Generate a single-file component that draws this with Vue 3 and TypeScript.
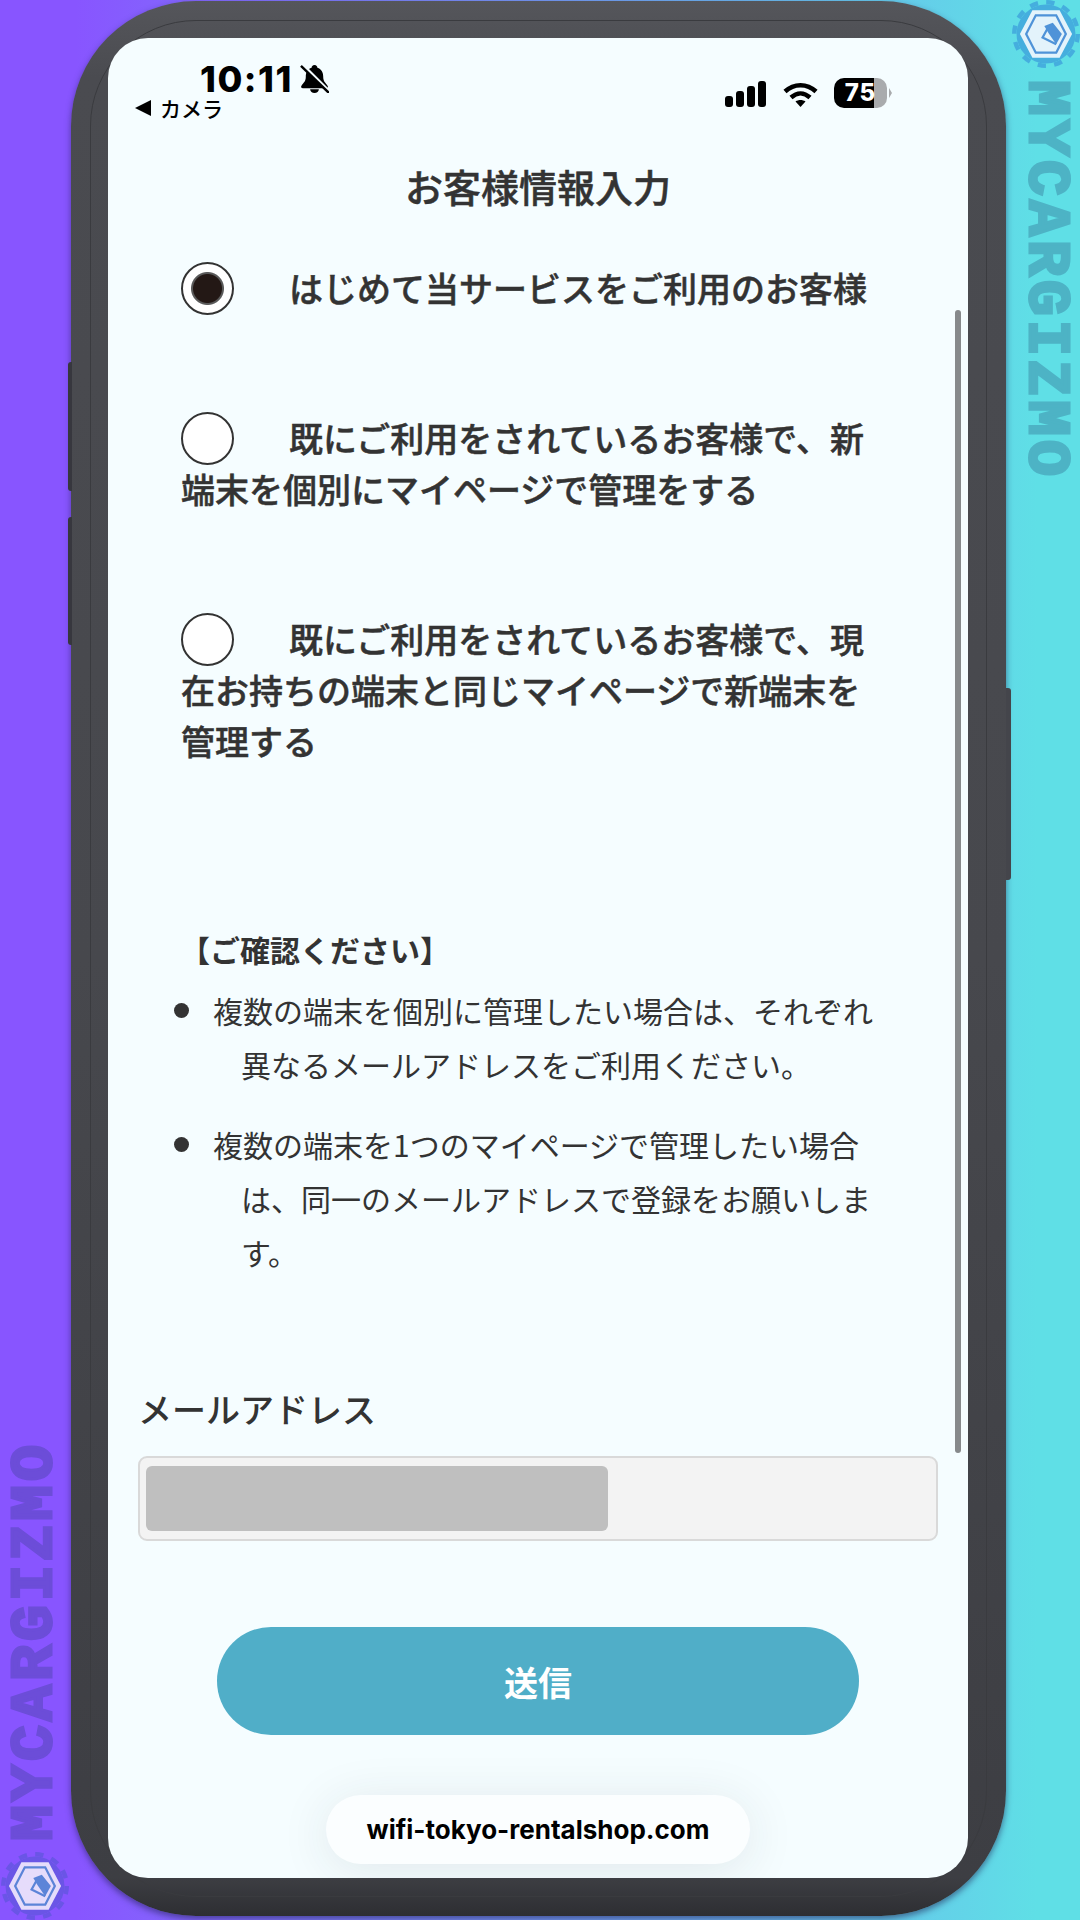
<template>
  <div class="stage">
    <div
      v-for="mark in marks"
      :key="mark.name"
      class="watermark"
      :class="mark.name"
    >
      <svg class="mark-logo" viewBox="0 0 60 60">
        <circle class="gear" cx="30" cy="30" r="26" />
        <circle class="gear-teeth" cx="30" cy="30" r="28" />
        <path class="hex-outer" d="M7 30 18 9H42L53 30 42 51H18Z" />
        <path class="hex-ring" d="M12.500 30 21 13.500H39L47.500 30 39 46.500H21Z" />
        <path class="hex-g" d="M39 39 27 33 32 24" />
        <path class="hex-fill" d="M28.500 23 36 20 44 30 39 39 32 29Z" />
      </svg>
      <span class="mark-text">MYCARGIZMO</span>
    </div>

    <div class="phone">
      <span class="side-btn volume-up"></span>
      <span class="side-btn volume-down"></span>
      <span class="side-btn power"></span>

      <div class="screen">
        <header class="status-bar">
          <div class="status-left">
            <div class="clock">
              <span class="time">10:11</span>
              <svg class="bell" viewBox="0 0 30 30">
                <path d="M15 1c2 0 3 1.500 3 3 4 1 6 5 6 9 0 5 2 6 4.500 9.500 1 1.500 0 2.500-1.500 2.500H3C1.500 25 .5 24 1.500 22.500 4 19 6 18 6 13c0-4 2-8 6-9 0-1.500 1-3 3-3Z" />
                <path d="M10.500 26h9c0 2.500-2 4-4.500 4s-4.500-1.500-4.500-4Z" />
                <path class="bell-gap" d="M2 0 30 28" />
                <path class="bell-slash" d="M1 2 30 30" />
              </svg>
            </div>
            <div class="back-link">
              <span class="back-arrow"></span>
              <span>カメラ</span>
            </div>
          </div>
          <div class="status-right">
            <div class="signal">
              <span v-for="h in signalBars" :key="h" :style="{ height: h + 'px' }"></span>
            </div>
            <svg class="wifi" viewBox="0 0 35 25">
              <path d="M2 9.500C11 1 24 1 33 9.500" />
              <path d="M8 15.500C14 10 21 10 27 15.500" />
              <path class="wifi-dot" d="M12.500 19.500C15.500 17.500 19.500 17.500 22.500 19.500L17.500 25Z" />
            </svg>
            <div class="battery">75</div>
            <span class="battery-nub"></span>
          </div>
        </header>

        <main class="content">
          <h1 class="page-title">お客様情報入力</h1>

          <div class="options">
            <label v-for="(option, index) in options" :key="index" class="option">
              <input
                v-model="selected"
                class="radio"
                type="radio"
                name="customer-type"
                :value="index"
              />{{ option }}
            </label>
          </div>

          <section class="notice">
            <h2 class="notice-title">【ご確認ください】</h2>
            <ul class="notice-list">
              <li>複数の端末を個別に管理したい場合は、それぞれ異なるメールアドレスをご利用ください。</li>
              <li>複数の端末を1つのマイページで管理したい場合は、同一のメールアドレスで登録をお願いします。</li>
            </ul>
          </section>

          <label class="field-label">メールアドレス</label>
          <div class="field">
            <div class="redacted"></div>
          </div>

          <button class="submit" type="button">送信</button>
        </main>

        <div class="scrollbar"></div>
        <div class="url-pill">wifi-tokyo-rentalshop.com</div>
      </div>
    </div>
  </div>
</template>

<script setup lang="ts">
  import { ref } from 'vue'

  const marks = [{ name: 'mark-top' }, { name: 'mark-bottom' }]
  const signalBars = [11, 16, 21, 26]

  const options = [
    'はじめて当サービスをご利用のお客様',
    '既にご利用をされているお客様で、新端末を個別にマイページで管理をする',
    '既にご利用をされているお客様で、現在お持ちの端末と同じマイページで新端末を管理する',
  ]

  const selected = ref(0)
</script>

<style>
  html,
  body {
    margin: 0;
    padding: 0;
  }
</style>

<style scoped>
  .stage {
    position: relative;
    width: 1080px;
    height: 1920px;
    overflow: hidden;
    padding: 1px 0 0 71px;
    box-sizing: border-box;
    background: linear-gradient(90deg, #8855ff 7%, #5fdfe6 96%);
    font-family: 'Noto Sans CJK JP', 'Noto Sans', sans-serif;
    color: #333;
  }

  /* watermark */
  .watermark {
    position: absolute;
    display: flex;
    flex-direction: column;
    align-items: center;
    width: 68px;
  }

  .mark-top {
    left: 1012px;
    top: 0;
    gap: 12px;
    --gear: #45aede;
    --hex: #e3f3fb;
    --ring: #4f93d8;
    --word: #4db3c5;
  }

  .mark-bottom {
    left: 1px;
    top: 1441px;
    flex-direction: column-reverse;
    gap: 11px;
    --gear: #6a55e6;
    --hex: #e6dcfb;
    --ring: #5c84d8;
    --word: #6c4dd8;
  }

  .mark-logo {
    width: 68px;
    height: 68px;
    flex-shrink: 0;
  }

  .gear {
    fill: var(--gear);
  }

  .gear-teeth {
    fill: none;
    stroke: var(--gear);
    stroke-width: 4;
    stroke-dasharray: 7.33 7.33;
  }

  .hex-outer {
    fill: var(--hex);
  }

  .hex-ring {
    fill: var(--hex);
    stroke: var(--ring);
    stroke-width: 2;
  }

  .hex-g {
    fill: none;
    stroke: var(--ring);
    stroke-width: 2;
  }

  .hex-fill {
    fill: var(--ring);
  }

  .mark-text {
    writing-mode: vertical-rl;
    font-family: 'Liberation Mono', monospace;
    font-weight: 700;
    font-size: 60px;
    line-height: 68px;
    letter-spacing: 4px;
    color: var(--word);
    -webkit-text-stroke: 3px var(--word);
  }

  .mark-bottom .mark-text {
    transform: rotate(180deg);
  }

  /* phone body */
  .phone {
    position: relative;
    width: 935px;
    height: 1915px;
    padding: 37px 38px 38px 37px;
    box-sizing: border-box;
    border-radius: 125px;
    background: linear-gradient(180deg, #55565b 0, #4a4b50 4%, #47484d 50%, #3d3e43 98%, #2d2e32 100%);
    box-shadow: 0 3px 6px rgba(30, 30, 80, 0.55);
  }

  .phone::before {
    content: '';
    position: absolute;
    inset: 19px;
    border: 1px solid #3a3b3f;
    border-radius: 106px;
  }

  .side-btn {
    position: absolute;
    width: 4px;
    background: #37373e;
  }

  .volume-up {
    left: -3px;
    top: 361px;
    height: 129px;
    border-radius: 3px 0 0 3px;
  }

  .volume-down {
    left: -3px;
    top: 516px;
    height: 128px;
    border-radius: 3px 0 0 3px;
  }

  .power {
    right: -5px;
    top: 687px;
    width: 5px;
    height: 192px;
    background: #44454b;
    border-radius: 0 3px 3px 0;
  }

  .screen {
    position: relative;
    height: 1840px;
    overflow: hidden;
    border-radius: 40px;
    background: #f5fdff;
  }

  /* status bar */
  .status-bar {
    display: flex;
    justify-content: space-between;
    height: 82px;
    padding: 22px 76px 0 27px;
    box-sizing: border-box;
    color: #000;
  }

  .clock {
    display: flex;
    align-items: center;
    gap: 7px;
    margin-left: 65px;
    height: 38px;
  }

  .time {
    font-family: Inter, sans-serif;
    font-weight: 800;
    font-size: 36px;
    line-height: 38px;
    letter-spacing: 1.5px;
  }

  .bell {
    width: 29px;
    height: 29px;
    margin-top: -2px;
  }

  .bell path {
    fill: #000;
  }

  .bell .bell-gap {
    fill: none;
    stroke: #f5fdff;
    stroke-width: 3;
  }

  .bell .bell-slash {
    fill: none;
    stroke: #000;
    stroke-width: 2.5;
  }

  .back-link {
    display: flex;
    align-items: center;
    gap: 9px;
    font-size: 21px;
    font-weight: 500;
    line-height: 24px;
    margin-top: -2px;
  }

  .back-arrow {
    width: 0;
    height: 0;
    border-style: solid;
    border-width: 8px 16px 8px 0;
    border-color: transparent #000 transparent transparent;
  }

  .status-right {
    display: flex;
    align-items: flex-start;
    height: 30px;
    padding-top: 18px;
  }

  .signal {
    display: flex;
    align-items: flex-end;
    gap: 3px;
    height: 26px;
    margin-top: 3px;
    margin-right: 17px;
  }

  .signal span {
    width: 8px;
    border-radius: 3px;
    background: #000;
  }

  .wifi {
    width: 35px;
    height: 25px;
    margin-top: 4px;
    margin-right: 16px;
  }

  .wifi path {
    fill: none;
    stroke: #000;
    stroke-width: 4.5;
  }

  .wifi .wifi-dot {
    fill: #000;
    stroke: none;
  }

  .battery {
    width: 53px;
    height: 30px;
    border-radius: 10px;
    background: linear-gradient(90deg, #000 75%, #a9abad 75%);
    color: #fff;
    font-family: Inter, sans-serif;
    font-weight: 800;
    font-size: 24px;
    line-height: 30px;
    letter-spacing: 1px;
    text-align: center;
  }

  .battery-nub {
    width: 0;
    height: 0;
    margin: 10px 0 0 2px;
    border-style: solid;
    border-width: 5px 0 5px 3px;
    border-color: transparent transparent transparent #a9abad;
  }

  /* form */
  .content {
    display: flex;
    flex-direction: column;
  }

  .page-title {
    margin: 38px 0 0;
    font-size: 38px;
    font-weight: 500;
    -webkit-text-stroke: 0.5px #333;
    line-height: 56px;
    text-align: center;
  }

  .options {
    display: flex;
    flex-direction: column;
    gap: 99px;
    margin: 48px 89px 0 73px;
  }

  .option {
    display: block;
    font-size: 34px;
    font-weight: 500;
    -webkit-text-stroke: 0.5px #333;
    line-height: 51px;
  }

  .radio {
    appearance: none;
    display: inline-block;
    width: 53px;
    height: 53px;
    margin: -12px 55px -4px 0;
    box-sizing: border-box;
    vertical-align: middle;
    border: 2px solid #333;
    border-radius: 50%;
    background: #fff;
  }

  .radio:checked {
    background: radial-gradient(circle, #231815 0 14px, #5a5a5a 15px 16px, #fff 17px);
  }

  .notice {
    margin: 163px 88px 0 73px;
  }

  .notice-title {
    margin: 0 0 0 -1px;
    font-size: 30px;
    font-weight: 700;
    line-height: 40px;
  }

  .notice-list {
    display: flex;
    flex-direction: column;
    gap: 26px;
    margin: 14px 0 0;
    padding: 0;
    list-style: none;
  }

  .notice-list li {
    position: relative;
    padding-left: 60px;
    text-indent: -28px;
    font-size: 30px;
    line-height: 54px;
  }

  .notice-list li::before {
    content: '';
    position: absolute;
    left: -7px;
    top: 20px;
    width: 15px;
    height: 15px;
    border-radius: 50%;
    background: #333;
  }

  .field-label {
    margin: 105px 0 0 30px;
    font-size: 34px;
    font-weight: 500;
    line-height: 50px;
  }

  .field {
    display: flex;
    align-items: center;
    height: 85px;
    margin: 22px 30px 0;
    padding: 0 6px;
    box-sizing: border-box;
    border: 2px solid #d9d9d9;
    border-radius: 9px;
    background: #f3f3f3;
  }

  .redacted {
    width: 462px;
    height: 65px;
    border-radius: 6px;
    background: #bfbfbf;
  }

  .submit {
    align-self: center;
    width: 642px;
    height: 108px;
    margin-top: 86px;
    border: 0;
    border-radius: 54px;
    background: #50aec8;
    color: #fff;
    font-family: inherit;
    font-size: 34px;
    font-weight: 700;
  }

  /* overlays */
  .scrollbar {
    position: absolute;
    right: 7px;
    top: 272px;
    width: 6px;
    height: 1143px;
    border-radius: 3px;
    background: #86898b;
  }

  .url-pill {
    position: absolute;
    left: 218px;
    top: 1757px;
    width: 424px;
    height: 69px;
    border-radius: 35px;
    background: #fbfeff;
    box-shadow: 0 6px 50px rgba(40, 50, 60, 0.1);
    color: #000;
    font-family: Inter, sans-serif;
    font-size: 26px;
    font-weight: 700;
    line-height: 70px;
    text-align: center;
  }
</style>
